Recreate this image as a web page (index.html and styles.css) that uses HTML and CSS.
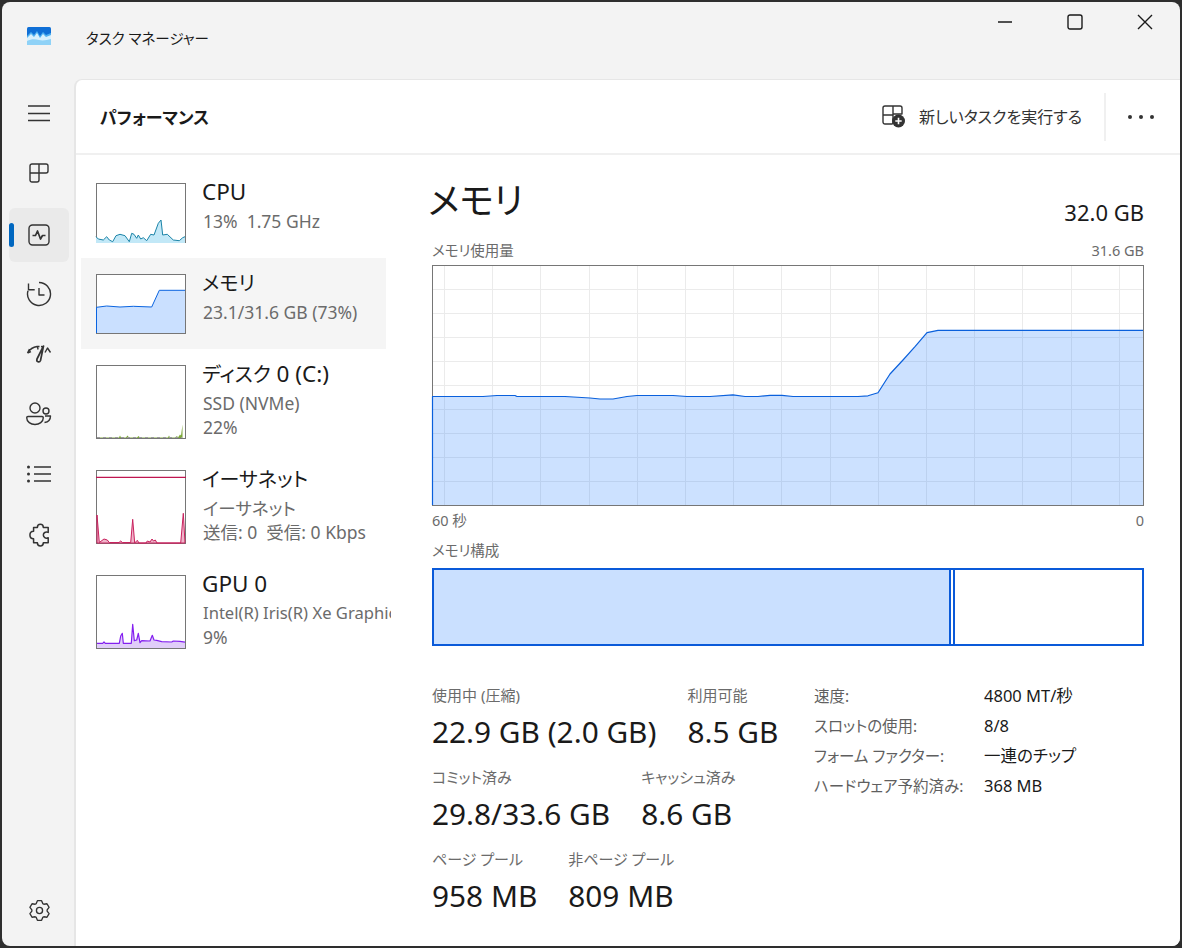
FILE: index.html
```html
<!DOCTYPE html>
<html lang="ja">
<head>
    <meta charset="UTF-8">
    <title>タスク マネージャー</title>
    <link rel="stylesheet" href="styles.css">
</head>
<body>
<div class="window">
    <div class="titlebar">
        <svg class="app-icon" viewBox="0 0 24 18">
            <rect width="24" height="18" rx="1.5" fill="#0f6fd6"/>
            <path d="M0 9 4 5l3 3 3-4 3 5 3-4 3 3 5-2v12H0z" fill="#4fb0f0"/>
            <path d="M0 11 4 7l3 3 3-4 3 5 3-4 3 3 5-2v10H0z" fill="#d8f0fd"/>
            <path d="M0 14c4-2 8-2 12-1s8 0 12-1v6H0z" fill="#8fd2f7"/>
        </svg>
        <span class="app-title">タスク マネージャー</span>
        <div class="win-controls">
            <button class="win-btn"><svg width="16" height="16" viewBox="0 0 16 16"><path d="M1 8h14"/></svg></button>
            <button class="win-btn"><svg width="16" height="16" viewBox="0 0 16 16"><rect x="1" y="1" width="14" height="14" rx="2"/></svg></button>
            <button class="win-btn"><svg width="16" height="16" viewBox="0 0 16 16"><path d="M1 1l14 14M15 1 1 15"/></svg></button>
        </div>
    </div>

    <div class="app-body">
        <nav class="rail">
            <button class="rail-btn"><svg viewBox="0 0 24 24" width="24" height="24"><path d="M1 5h22M1 12.500h22M1 19.500h22"/></svg></button>
            <button class="rail-btn"><svg viewBox="0 0 20 20" width="20" height="20"><path d="M3 1h14a2 2 0 0 1 2 2v5a2 2 0 0 1-2 2h-7v7a2 2 0 0 1-2 2H3a2 2 0 0 1-2-2V3a2 2 0 0 1 2-2zM1 10h9M10 1v9"/></svg></button>
            <button class="rail-btn active"><svg viewBox="0 0 22 22" width="22" height="22"><rect x="1" y="1" width="20" height="20" rx="3.500"/><path class="thick" d="M4.500 11.500h3l2-4.500 3 8 2-3.500h3"/></svg></button>
            <button class="rail-btn"><svg viewBox="0 0 26 26" width="26" height="26"><path d="M13 1.500a11.500 11.500 0 1 1-11 8.200M2.500 2.500v6.200h6.200M13 7v7h5.500"/></svg></button>
            <button class="rail-btn"><svg viewBox="0 0 26 22" width="26" height="22"><path d="M1.500 10C4 6 7 4 11 3.500h2.500M1.500 10 5 8.700M1.500 10l2-4M15 3.500l3 .5M19 9.500 21.500 5l3 4.500M11.500 4l.6 2.500"/><path class="thick" d="M17.500 3 11 16c-1 3 2.500 4 3.500 1.500z"/></svg></button>
            <button class="rail-btn"><svg viewBox="0 0 26 26" width="26" height="26"><circle cx="9" cy="7" r="5"/><circle cx="20" cy="10" r="3"/><path d="M2 15.500h14c.8 0 1.300.5 1.300 1.300 0 4-4 6.700-8.300 6.700s-8.300-2.700-8.300-6.700c0-.8.500-1.300 1.300-1.300zM19 15h5.500c0 4-2.500 6-6 6.500"/></svg></button>
            <button class="rail-btn"><svg viewBox="0 0 26 22" width="26" height="22"><path d="M8 4h17M8 11h17M8 18h17"/><circle class="dot" cx="2.500" cy="4" r="1.500"/><circle class="dot" cx="2.500" cy="11" r="1.500"/><circle class="dot" cx="2.500" cy="18" r="1.500"/></svg></button>
            <button class="rail-btn"><svg viewBox="0 0 24 24" width="26" height="26"><path d="M7 6h3.500c0-4 5.500-4 5.500 0h4.500v4.500c-2.500-1-4.500.5-4.500 2.500s2 3.500 4.500 2.500V20H16c0 4-5.500 4-5.500 0H7v-3.500c-4.500 0-4.500-7 0-7z"/></svg></button>
            <button class="rail-btn settings"><svg viewBox="0 0 24 24" width="23" height="23"><path d="M15.400 4.750 14.180 1.730H9.820L8.620 4.750 7.410 5.450 4.200 4.970 2.010 8.760 4.030 11.300V12.700L2.010 15.240 4.200 19.030 7.410 18.550 8.620 19.250 9.820 22.270H14.180L15.380 19.250 16.590 18.550 19.800 19.030 21.990 15.240 19.970 12.700V11.300L21.990 8.760 19.800 4.970 16.590 5.450z"/><circle cx="12" cy="12" r="3.200"/></svg></button>
        </nav>

        <div class="content">
            <header class="page-header">
                <h1 class="page-title">パフォーマンス</h1>
                <button class="run-task">
                    <svg viewBox="0 0 24 24" width="24" height="24">
                        <path d="M3 2h15a2 2 0 0 1 2 2v6H11v9a2 2 0 0 1-1 1H3a2 2 0 0 1-2-2V4a2 2 0 0 1 2-2zM1 11h10M11 2v8"/>
                        <circle class="dot" cx="16.500" cy="17" r="6.500"/>
                        <path class="plus" d="M13.300 17h6.400M16.500 13.800v6.400"/>
                    </svg>
                    新しいタスクを実行する
                </button>
                <span class="header-divider"></span>
                <button class="more"><i></i><i></i><i></i></button>
            </header>

            <div class="perf">
                <aside class="devices">
                    <div class="device">
                        <div class="thumb">
                            <svg viewBox="1 1 88 58" class="cpu">
                                <path class="fill" d="M0 53.700 2.300 56l5 1 3.400-3.300 2.600 3.300 3.400 1.700L20 52.700l4-1.400 5 1.400 4.300 6 2.400-8.400 2.300 1 2.700 4 1.600-3.300 2.400 4 2.600-1.300 3.400 3 4-6.400 3.300.7 4.300-11.700 2.700-3.300 1.700 15 4.600-.7 6 5.700 6 .7 3.400-3 2.300-1V60H0z"/>
                                <path class="line" d="M0 53.700 2.300 56l5 1 3.400-3.300 2.600 3.300 3.400 1.700L20 52.700l4-1.400 5 1.400 4.300 6 2.400-8.400 2.300 1 2.700 4 1.600-3.300 2.400 4 2.600-1.300 3.400 3 4-6.400 3.300.7 4.300-11.700 2.700-3.300 1.700 15 4.600-.7 6 5.700 6 .7 3.400-3 2.300-1"/>
                            </svg>
                        </div>
                        <div class="device-text">
                            <div class="device-name">CPU</div>
                            <div class="device-sub">13%&nbsp; 1.75 GHz</div>
                        </div>
                    </div>
                    <div class="device selected">
                        <div class="thumb">
                            <svg viewBox="1 1 88 58" class="mem">
                                <path class="fill" d="M1 33.300 10.700 32l13.300 1 13.300-.7 18.400.7 7.600-16.700H89V59H1z"/>
                                <path class="line" d="M.5 59V33.300L10.700 32l13.300 1 13.300-.7 18.400.7 7.600-16.700H89"/>
                            </svg>
                        </div>
                        <div class="device-text">
                            <div class="device-name"><span class="kana">メモリ</span></div>
                            <div class="device-sub">23.1/31.6 GB (73%)</div>
                        </div>
                    </div>
                    <div class="device">
                        <div class="thumb tall">
                            <svg viewBox="1 1 88 72" class="disk">
                                <path class="fill" d="M1 72.500h22l1-2 1 2h5l1.500-2 1.500 2h8l1.500-1.500 1.500 1.500h28l1-2 1 2h5l2-1.500 1 1.500 2-3 1 1 1.500-11V73H1z"/>
                                <path class="line" stroke-dasharray="3 3" d="M1 72.500h85"/>
                            </svg>
                        </div>
                        <div class="device-text">
                            <div class="device-name"><span class="kana">ディスク</span> 0 (C:)</div>
                            <div class="device-sub">SSD (NVMe)</div>
                            <div class="device-sub">22%</div>
                        </div>
                    </div>
                    <div class="device">
                        <div class="thumb tall">
                            <svg viewBox="1 1 88 72" class="net">
                                <path class="fill" d="M1 73V45l2.300 27.500L8 69l3.300 1 2 2.500H23l1.700-1.500 1.700 1.500h8.300L36.700 49.300 38.700 73 41.300 70.300 43 73h7l1.300-2 2.700 1 2-3 1.500 2 1.800-1 1.700 3H84.700L87.300 43.300 89 73z"/>
                                <path class="line" d="M0 7.300h90"/>
                            </svg>
                        </div>
                        <div class="device-text">
                            <div class="device-name"><span class="kana">イーサネット</span></div>
                            <div class="device-sub">イーサネット</div>
                            <div class="device-sub">送信: 0&nbsp; 受信: 0 Kbps</div>
                        </div>
                    </div>
                    <div class="device">
                        <div class="thumb tall">
                            <svg viewBox="1 1 88 72" class="gpu">
                                <path class="fill" d="M1 68.300h5.700L8 67l1.300 1.300h14l1.400-7.300 1.600-2.700 1 10h8L36.700 49.300l1.600 16.400 2.400-.7 1.600-6.700 1.700 9.400 1.700-2 8.300.3 2.300-5.700 1.700 4.700 2.700.3 5 1.400 10 .3 1.600-1 6.700.3 5 .9V73H1z"/>
                                <path class="line" d="M1 68.300h5.700L8 67l1.300 1.300h14l1.400-7.300 1.600-2.700 1 10h8L36.700 49.300l1.600 16.400 2.400-.7 1.600-6.700 1.700 9.400 1.700-2 8.300.3 2.300-5.700 1.700 4.700 2.700.3 5 1.400 10 .3 1.600-1 6.700.3 5 .9"/>
                            </svg>
                        </div>
                        <div class="device-text">
                            <div class="device-name">GPU 0</div>
                            <div class="device-sub clipped">Intel(R) Iris(R) Xe Graphics</div>
                            <div class="device-sub">9%</div>
                        </div>
                    </div>
                </aside>

                <main class="detail">
                    <div class="detail-head">
                        <h2 class="detail-title">メモリ</h2>
                        <span class="detail-total">32.0 GB</span>
                    </div>
                    <div class="caption-row">
                        <span>メモリ使用量</span>
                        <span>31.6 GB</span>
                    </div>
                    <div class="chart">
                        <svg viewBox="1 1 710 239">
                            <path class="grid" d="M12.500 1V240M60.500 1V240M108.500 1V240M157.500 1V240M205.500 1V240M253.500 1V240M301.500 1V240M349.500 1V240M398.500 1V240M446.500 1V240M494.500 1V240M542.500 1V240M590.500 1V240M639.500 1V240M687.500 1V240M1 24.500H711M1 48.500H711M1 72.500H711M1 96.500H711M1 120.500H711M1 144.500H711M1 168.500H711M1 192.500H711M1 216.500H711"/>
                            <path class="usage-fill" d="M1 131.500H51L65 130.500H83L85 131.500H133L158 133 168 134H181L195 131.500 205 130.500H241L255 131.500H278L301 129.800 313 131.500H326L338 130.300H350L361 131.500H426L436 130.800 446 127.800 458 109 471 95 483 81.700 495 67.700 506 65.300H711V240H1z"/>
                            <path class="usage-line" d="M.5 240V131.500H51L65 130.500H83L85 131.500H133L158 133 168 134H181L195 131.500 205 130.500H241L255 131.500H278L301 129.800 313 131.500H326L338 130.300H350L361 131.500H426L436 130.800 446 127.800 458 109 471 95 483 81.700 495 67.700 506 65.300H711"/>
                        </svg>
                    </div>
                    <div class="caption-row axis">
                        <span>60 秒</span>
                        <span>0</span>
                    </div>
                    <div class="caption-row compose-label">
                        <span>メモリ構成</span>
                    </div>
                    <div class="compose-bar">
                        <div class="seg-used"></div>
                        <div class="seg-gap"></div>
                        <div class="seg-free"></div>
                    </div>

                    <div class="stats">
                        <div class="stats-left">
                            <div class="stat-row">
                                <div class="stat"><div class="stat-label">使用中 (圧縮)</div><div class="stat-value">22.9 GB (2.0 GB)</div></div>
                                <div class="stat"><div class="stat-label">利用可能</div><div class="stat-value">8.5 GB</div></div>
                            </div>
                            <div class="stat-row">
                                <div class="stat"><div class="stat-label">コミット済み</div><div class="stat-value">29.8/33.6 GB</div></div>
                                <div class="stat"><div class="stat-label">キャッシュ済み</div><div class="stat-value">8.6 GB</div></div>
                            </div>
                            <div class="stat-row">
                                <div class="stat"><div class="stat-label">ページ プール</div><div class="stat-value">958 MB</div></div>
                                <div class="stat"><div class="stat-label">非ページ プール</div><div class="stat-value">809 MB</div></div>
                            </div>
                        </div>
                        <div class="spec-table">
                            <span class="spec-key">速度:</span><span class="spec-val">4800 MT/秒</span>
                            <span class="spec-key">スロットの使用:</span><span class="spec-val">8/8</span>
                            <span class="spec-key">フォーム ファクター:</span><span class="spec-val">一連のチップ</span>
                            <span class="spec-key">ハードウェア予約済み:</span><span class="spec-val">368 MB</span>
                        </div>
                    </div>
                </main>
            </div>
        </div>
    </div>
</div>
</body>
</html>
```

FILE: styles.css
```css
* {
    box-sizing: border-box;
}
html, body {
    height: 100%;
}
body {
    margin: 0;
    padding: 2px;
    background-color: #2e2e2e;
    color: #1a1a1a;
    font-family: "Noto Sans", "Noto Sans CJK JP", sans-serif;
    font-feature-settings: "palt";
    overflow: hidden;
}
button {
    background: none;
    border: none;
    padding: 0;
    font: inherit;
    color: inherit;
}
svg {
    display: block;
    fill: none;
    stroke: #333;
    stroke-width: 1.4;
    stroke-linejoin: round;
}
.window {
    height: 100%;
    display: flex;
    flex-direction: column;
    background-color: #f3f3f3;
    border-radius: 8px;
    overflow: hidden;
}

/* title bar */
.titlebar {
    height: 77px;
    flex: none;
    display: flex;
    align-items: flex-start;
}
.app-icon {
    width: 24px;
    height: 18px;
    margin: 25px 0 0 25px;
    stroke: none;
}
.app-title {
    margin: 25px 0 0 35px;
    font-size: 14.5px;
    line-height: 22px;
}
.win-controls {
    margin-left: auto;
    display: flex;
}
.win-btn {
    width: 70px;
    height: 40px;
    display: flex;
    align-items: center;
    justify-content: center;
}
.win-btn svg {
    stroke: #1a1a1a;
    stroke-width: 1.4;
}

/* left rail */
.app-body {
    flex: 1;
    display: flex;
    min-height: 0;
}
.rail {
    width: 72px;
    flex: none;
    display: flex;
    flex-direction: column;
    padding: 7px 0 0 7px;
}
.rail-btn {
    position: relative;
    width: 60px;
    height: 54px;
    margin-bottom: 6px;
    flex: none;
    display: flex;
    align-items: center;
    justify-content: center;
    border-radius: 6px;
}
.rail-btn.active {
    background-color: #eaeaea;
    margin-top: 2px;
    margin-bottom: 5px;
}
.rail-btn.active::before {
    content: "";
    position: absolute;
    left: 0;
    top: 15px;
    width: 5px;
    height: 24px;
    border-radius: 3px;
    background-color: #0067c0;
}
.rail-btn.settings {
    margin-top: auto;
    margin-bottom: 9px;
}
.thick {
    stroke-width: 1.7;
}
.dot {
    fill: #333;
    stroke: none;
}
.plus {
    stroke: #fff;
    stroke-width: 1.6;
}

/* content panel */
.content {
    flex: 1;
    min-width: 0;
    display: flex;
    flex-direction: column;
    background-color: #fff;
    border-top: 1px solid #e6e6e6;
    border-left: 2px solid #e6e6e6;
    border-top-left-radius: 8px;
}
.page-header {
    height: 75px;
    flex: none;
    display: flex;
    align-items: center;
    padding-left: 24px;
    border-bottom: 2px solid #f0f0f0;
}
.page-title {
    margin: 0 auto 0 0;
    font-size: 17px;
    font-weight: 600;
}
.run-task {
    display: flex;
    align-items: center;
    gap: 13px;
    margin-bottom: 2px;
    font-size: 16px;
    color: #333;
}
.header-divider {
    width: 2px;
    height: 48px;
    margin: 0 22px;
    background-color: #f0f0f0;
}
.more {
    display: flex;
    gap: 7px;
    margin-right: 26px;
}
.more i {
    width: 4px;
    height: 4px;
    border-radius: 50%;
    background-color: #333;
}

/* devices column */
.perf {
    flex: 1;
    display: flex;
    min-height: 0;
}
.devices {
    width: 315px;
    flex: none;
    padding: 12px 0 0 5px;
    overflow: hidden;
}
.device {
    display: flex;
    gap: 16px;
    width: 305px;
    padding: 16px 0 15px 15px;
}
.device.selected {
    background-color: #f5f5f5;
}
.thumb {
    width: 90px;
    height: 60px;
    flex: none;
    border: 1px solid #767676;
    background-color: #fff;
}
.thumb.tall {
    height: 74px;
}
.thumb svg {
    width: 100%;
    height: 100%;
    stroke-width: 1;
    overflow: visible;
}
.cpu .fill { fill: #c2e8f7; stroke: none; }
.cpu .line { stroke: #1b84a8; }
.mem .fill { fill: #cae0ff; stroke: none; }
.mem .line { stroke: #0a64e0; }
.disk .fill { fill: #7da83a; stroke: none; }
.disk .line { stroke: #9a9a9a; }
.net .fill { fill: #f0b4ca; stroke: #c9225e; }
.net .line { stroke: #bf1650; stroke-width: 1.2; }
.gpu .fill { fill: #e0cdf9; stroke: none; }
.gpu .line { stroke: #8420f0; stroke-width: 1.2; }
.device-text {
    height: 74px;
    margin-top: -5px;
    min-width: 0;
}
.device:nth-child(-n+2) .device-text {
    height: 60px;
}
.device-name {
    height: 28px;
    font-size: 22.5px;
    line-height: 28px;
    margin-bottom: 3px;
    white-space: nowrap;
}
.kana {
    font-size: 20px;
}
.device-sub {
    height: 24px;
    margin-left: 1px;
    font-size: 17.5px;
    line-height: 24px;
    color: #6b6b6b;
    white-space: nowrap;
}
.device-sub.clipped {
    font-size: 16.6px;
}

/* memory detail */
.detail {
    flex: 1;
    min-width: 0;
    padding: 22px 36px 0 41px;
}
.detail-head {
    display: flex;
    justify-content: space-between;
    align-items: flex-end;
    height: 48px;
    margin-bottom: 15px;
}
.detail-title {
    margin: 0 0 0 -4px;
    font-size: 36px;
    line-height: 48px;
    font-weight: 400;
}
.detail-total {
    font-size: 22px;
    line-height: 26px;
}
.caption-row {
    display: flex;
    justify-content: space-between;
    font-size: 14.5px;
    line-height: 20px;
    color: #6b6b6b;
}
.chart {
    height: 241px;
    margin-top: 5px;
    border: 1px solid #767676;
}
.chart svg {
    width: 100%;
    height: 100%;
    stroke-width: 1;
    overflow: visible;
}
.grid {
    stroke: #ebebeb;
}
.usage-fill {
    fill: rgba(0, 103, 255, 0.2);
    stroke: none;
}
.usage-line {
    stroke: #0a60dc;
    stroke-width: 1.2;
}
.axis {
    margin-top: 4px;
}
.compose-label {
    margin-top: 10px;
}
.compose-bar {
    height: 78px;
    margin-top: 8px;
    display: flex;
    border: 2px solid #0a5ad9;
}
.seg-used {
    width: 517px;
    flex: none;
    background-color: #cae0ff;
    border-right: 2px solid #0a5ad9;
}
.seg-gap {
    width: 2px;
    flex: none;
}
.seg-free {
    flex: 1;
    border-left: 2px solid #0a5ad9;
}
.stats {
    display: flex;
    margin-top: 39px;
}
.stats-left {
    width: 382px;
    flex: none;
}
.stat-row {
    display: flex;
    gap: 31px;
    margin-bottom: 15px;
}
.stat-label {
    font-size: 15px;
    line-height: 20px;
    color: #6b6b6b;
    white-space: nowrap;
}
.stat-value {
    margin-top: 7px;
    font-size: 29.8px;
    line-height: 40px;
    white-space: nowrap;
}
.spec-table {
    display: grid;
    grid-template-columns: 170px 1fr;
    grid-auto-rows: 30px;
    align-items: center;
    margin-top: -5px;
}
.spec-key {
    font-size: 15.5px;
    color: #5f5f5f;
    white-space: nowrap;
}
.spec-val {
    font-size: 16.5px;
}
```
